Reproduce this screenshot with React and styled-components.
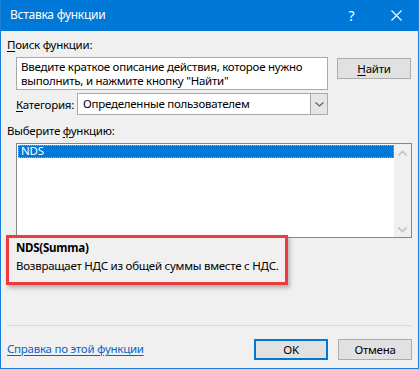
import styled, { createGlobalStyle } from 'styled-components';

// базовые стили страницы
const GlobalStyle = createGlobalStyle`
  html, body {
    margin: 0;
    padding: 0;
    background: #f0f0f0;
  }
  * {
    box-sizing: border-box;
  }
`;

const Window = styled.div`
  width: 419px;
  height: 369px;
  display: flex;
  flex-direction: column;
  background: #f0f0f0;
  border: 1px solid #1a7fd4;
  border-top: none;
  font-family: 'Noto Sans', 'Open Sans', sans-serif;
  font-size: 11.5px;
  letter-spacing: -0.25px;
  color: #000;
  overflow: hidden;
  white-space: nowrap;
`;

// заголовок окна
const TitleBar = styled.div`
  height: 31px;
  margin: 0 -1px;
  background: #0078d7;
  color: #fff;
  display: flex;
  align-items: center;
  padding-left: 10px;
  font-size: 12px;
`;

const Title = styled.div`
  flex: 1;
  padding-bottom: 2px;
`;

const TitleButton = styled.div`
  width: 45px;
  height: 31px;
  display: flex;
  align-items: center;
  justify-content: center;
  font-size: 14px;
`;

const Body = styled.div`
  flex: 1;
  display: flex;
  flex-direction: column;
  padding: 6px 6px 0 6px;
`;

const Label = styled.div`
  line-height: 16px;
  height: 16px;
  margin-top: ${(p) => p.top || 0}px;
  u {
    text-decoration: underline;
    text-underline-offset: 2px;
  }
`;

const SearchRow = styled.div`
  display: flex;
  align-items: flex-start;
  gap: 9px;
  margin-top: 4px;
  padding-left: 9px;
`;

const SearchBox = styled.div`
  width: 312px;
  height: 33px;
  background: #fff;
  border: 1px solid #a9a9a9;
  padding: 2px 0 0 4px;
  line-height: 14px;
`;

const Button = styled.div`
  width: 74px;
  height: 21px;
  margin-top: ${(p) => p.top || 0}px;
  background: #e1e1e1;
  border: ${(p) => (p.primary ? '2px solid #0078d7' : '1px solid #adadad')};
  display: flex;
  align-items: center;
  justify-content: center;
  line-height: 16px;
  u {
    text-decoration: underline;
    text-underline-offset: 2px;
  }
`;

const CategoryRow = styled.div`
  display: flex;
  align-items: center;
  margin-top: 3px;
  padding-left: 9px;
`;

const CategoryLabel = styled.div`
  width: 61px;
  u {
    text-decoration: underline;
    text-underline-offset: 2px;
  }
`;

const Select = styled.div`
  width: 251px;
  height: 22px;
  background: #fff;
  border: 1px solid #a9a9a9;
  display: flex;
  align-items: center;
  padding-left: 5px;
`;

const SelectText = styled.div`
  flex: 1;
  padding-bottom: 1px;
`;

const DropButton = styled.div`
  width: 17px;
  height: 20px;
  background: #e5e5e5;
  border-left: 1px solid #a9a9a9;
  display: flex;
  align-items: center;
  justify-content: center;
`;

const ListBox = styled.div`
  margin: 4px 0 0 9px;
  height: 95px;
  background: #fff;
  border: 1px solid #828790;
  display: flex;
`;

const ListItems = styled.div`
  flex: 1;
  padding: 1px 0 0 1px;
`;

const ListItem = styled.div`
  height: 13px;
  line-height: 12px;
  padding-left: 3px;
  background: ${(p) => (p.selected ? '#0078d7' : 'transparent')};
  color: ${(p) => (p.selected ? '#fff' : '#000')};
  outline: ${(p) => (p.selected ? '1px dotted #f0a030' : 'none')};
  outline-offset: -1px;
`;

const ScrollBar = styled.div`
  width: 17px;
  background: #f0f0f0;
  display: flex;
  flex-direction: column;
  justify-content: space-between;
  align-items: center;
  padding: 6px 0 4px;
`;

// подсветка описания функции (красная рамка)
const Description = styled.div`
  width: 282px;
  height: 50px;
  margin: -3px 0 0 -1px;
  border: 3px solid #ef3b3f;
  box-shadow: 2px 3px 4px rgba(0, 0, 0, 0.25);
  padding: 1px 0 0 7px;
  position: relative;
  line-height: 18px;
`;

const FuncName = styled.div`
  font-weight: bold;
`;

const Separator = styled.div`
  height: 1px;
  background: #d9d9d9;
  margin-top: 40px;
`;

const Footer = styled.div`
  display: flex;
  align-items: center;
  margin-top: 13px;
  gap: 10px;
`;

const HelpLink = styled.a`
  flex: 1;
  color: #0066cc;
  text-decoration: underline;
  text-underline-offset: 2px;
  padding-bottom: 2px;
`;

const Chevron = ({ up }) => (
  <svg width="9" height="6" viewBox="0 0 9 6">
    <path
      d={up ? 'M0.5 5.5 L4.5 1.5 L8.5 5.5' : 'M0.5 0.5 L4.5 4.5 L8.5 0.5'}
      fill="none"
      stroke="#c3c3c3"
      strokeWidth="1.6"
    />
  </svg>
);

const App = () => (
  <>
    <GlobalStyle />
    <Window>
      <TitleBar>
        <Title>Вставка функции</Title>
        <TitleButton>?</TitleButton>
        <TitleButton>
          <svg width="11" height="11" viewBox="0 0 11 11">
            <path d="M0.5 0.5 L10.5 10.5 M10.5 0.5 L0.5 10.5" stroke="#fff" strokeWidth="1.1" />
          </svg>
        </TitleButton>
      </TitleBar>
      <Body>
        <Label>
          <u>П</u>оиск функции:
        </Label>
        <SearchRow>
          <SearchBox>
            Введите краткое описание действия, которое нужно
            <br />
            выполнить, и нажмите кнопку "Найти"
          </SearchBox>
          <Button top={1}>
            <span>
              <u>Н</u>айти
            </span>
          </Button>
        </SearchRow>
        <CategoryRow>
          <CategoryLabel>
            <u>К</u>атегория:
          </CategoryLabel>
          <Select>
            <SelectText>Определенные пользователем</SelectText>
            <DropButton>
              <svg width="9" height="5" viewBox="0 0 9 5">
                <path d="M0.5 0.5 L4.5 4 L8.5 0.5" fill="none" stroke="#606060" strokeWidth="1.2" />
              </svg>
            </DropButton>
          </Select>
        </CategoryRow>
        <Label top={8}>
          Выберите <u>ф</u>ункцию:
        </Label>
        <ListBox>
          <ListItems>
            <ListItem selected>NDS</ListItem>
          </ListItems>
          <ScrollBar>
            <Chevron up />
            <Chevron />
          </ScrollBar>
        </ListBox>
        <Description>
          <FuncName>NDS(Summa)</FuncName>
          <div>Возвращает НДС из общей суммы вместе с НДС.</div>
        </Description>
        <Separator />
        <Footer>
          <HelpLink href="#">Справка по этой функции</HelpLink>
          <Button primary>OK</Button>
          <Button>Отмена</Button>
        </Footer>
      </Body>
    </Window>
  </>
);

export default App;
